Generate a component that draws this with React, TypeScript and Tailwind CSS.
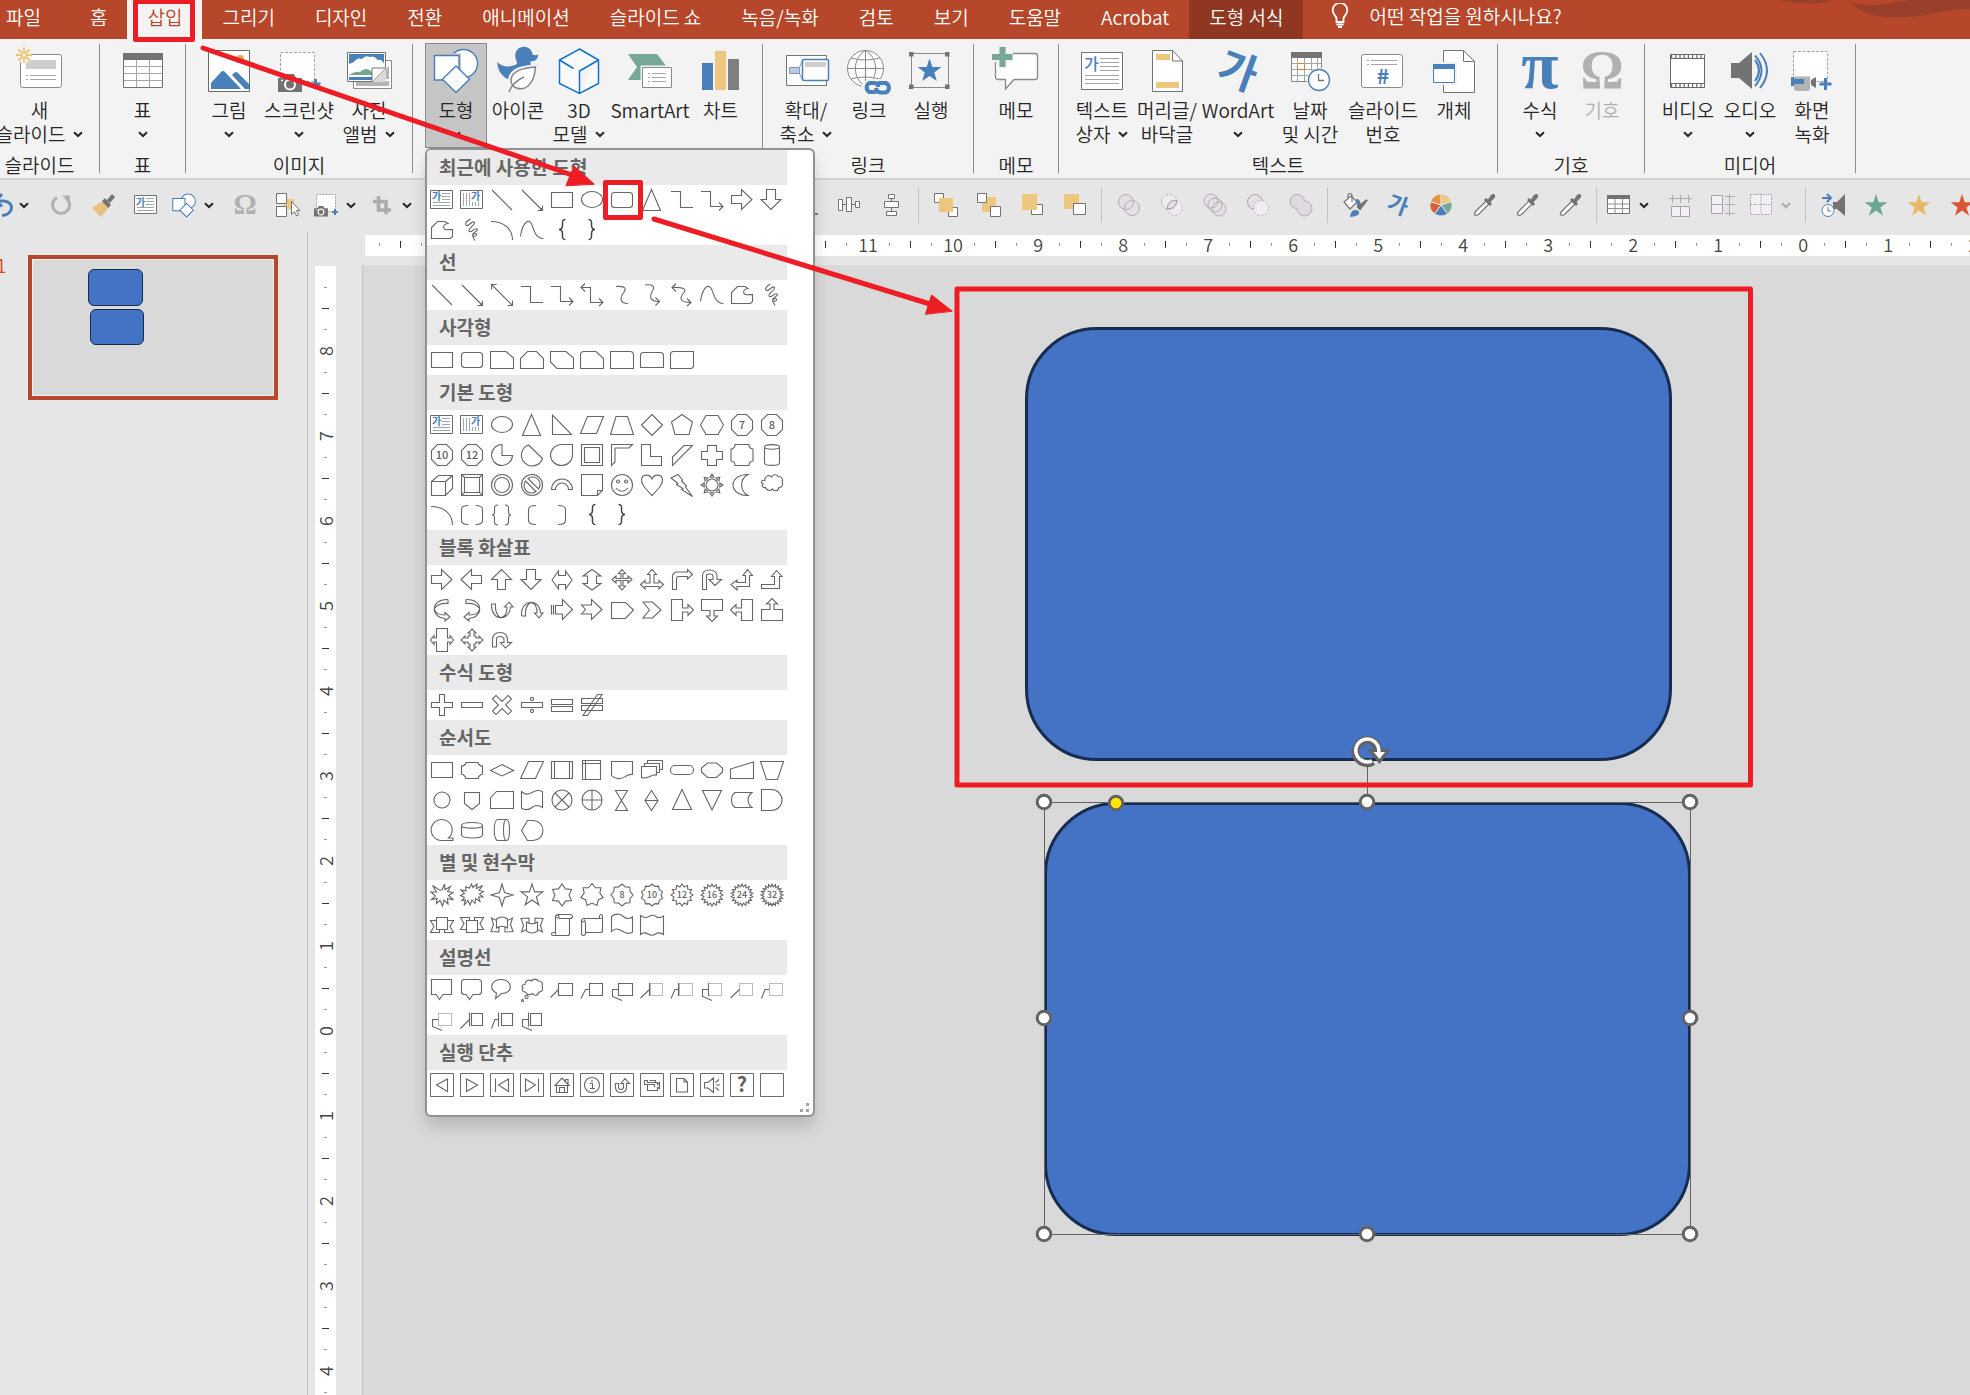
import React, { useState } from "react";

type Glyph = {
  d?: string;
  dash?: string;
  text?: string;
  textSize?: number;
  flip?: string;
  heavy?: boolean;
  box?: boolean;
  ga?: "h" | "v";
};

const circle = (cx: number, cy: number, r: number) =>
  `M${cx - r} ${cy}a${r} ${r} 0 1 0 ${2 * r} 0a${r} ${r} 0 1 0 ${-2 * r} 0z`;

const star = (n: number, outer: number, inner: number, cx = 15, cy = 15) => {
  let d = "";
  for (let i = 0; i < n * 2; i++) {
    const r = i % 2 ? inner : outer;
    const a = (Math.PI * i) / n - Math.PI / 2;
    d += `${i ? "L" : "M"}${(cx + r * Math.cos(a)).toFixed(1)} ${(cy + r * Math.sin(a)).toFixed(1)}`;
  }
  return d + "z";
};

const sunRays = () => {
  let d = circle(15, 15, 6);
  for (let i = 0; i < 8; i++) {
    const a = (Math.PI * i) / 4;
    const p = (r: number, t: number) =>
      `${(15 + r * Math.cos(a + t)).toFixed(1)} ${(15 + r * Math.sin(a + t)).toFixed(1)}`;
    d += `M${p(11, 0)}L${p(8, 0.25)}L${p(8, -0.25)}z`;
  }
  return d;
};

const MIRROR = "translate(30 0) scale(-1 1)";
const UPSIDE = "translate(0 30) scale(1 -1)";
const CW = "rotate(90 15 15)";
const CCW = "rotate(-90 15 15)";

const OCT = "M10.5 4.5H19.5L25.5 10.5V19.5L19.5 25.5H10.5L4.5 19.5V10.5z";
const CLOUD =
  "M8 10.5C7 6.5 12 4 14.5 7C16 4 20 4 21 6.5C24 6 26.5 9 25 11.5C26.5 14.5 25 18 22 17.5C21 21.5 17 21.5 15.5 19C13 21.5 9.5 20.5 8.5 17.5C5.5 18 4.5 15.5 6 14C3.5 12.5 4.5 9.5 8 10.5z";
const LBRACE =
  "M18.5 4.5C15 4.5 15.5 7 15.5 10C15.5 13 15 14.5 12 14.5C15 14.5 15.5 16 15.5 19C15.5 22 15 24.5 18.5 24.5";
const CURVED =
  "M21 4.5C12 4 7 9 7.5 14C8 18 12 20 18 20V17.5L23 22L18 26V23.5C10 23 6 17 7.8 12M21 4.5V8.5C15 8 10 10 7.8 13";
const CALLOUT_ARROW = "M4.5 4.5H15.5V13H21V9.5L26.5 15L21 20.5V17H15.5V25.5H4.5z";
const RIBBON =
  "M9.5 7.5H20.5V19.5H9.5zM9.5 10.5H3.5L7 16.5L3.5 22.5H12.5V19.5M20.5 10.5H26.5L23 16.5L26.5 22.5H17.5V19.5";
const CURVED_RIBBON =
  "M9.5 9Q15 5 20.5 9V18Q15 14.5 9.5 18zM9.5 10.5L4.5 8L6.5 14.5L4 21.5L12 22V17M20.5 10.5L25.5 8L23.5 14.5L26 21.5L18 22V17";
const SCROLL =
  "M8.5 22.5V7C8.5 4 12 4.5 12 6.5S9.5 8.5 10 7M10 4.5H23Q25.5 4.5 25.5 6.5T23 8.5H12M22.5 8.5V23.5Q22.5 25.5 20.5 25.5H6Q4.5 25.5 4.5 24T6.5 22.5H8.5V24.5";

const G: Record<string, Glyph> = {
  textbox: { ga: "h" },
  vtextbox: { ga: "v" },
  line: { d: "M5 5L25 25" },
  arrowLine: { d: "M5 5L25 25M25.5 20.5V25.5H20.5M25 23V25H23" },
  doubleLine: { d: "M4.5 4.5L25.5 25.5M25.5 20.5V25.5H20.5M4.5 9.5V4.5H9.5" },
  rect: { d: "M4.5 7.5H25.5V22.5H4.5z" },
  ellipse: { d: "M4.5 14.5A10.5 8 0 1 0 25.5 14.5A10.5 8 0 1 0 4.5 14.5z" },
  roundRect: { d: "M7.5 7.5H22.5Q25.5 7.5 25.5 10.5V19.5Q25.5 22.5 22.5 22.5H7.5Q4.5 22.5 4.5 19.5V10.5Q4.5 7.5 7.5 7.5z" },
  triangle: { d: "M14.5 4.5L23.5 25.5H5.5z" },
  elbow: { d: "M4 6.5H13.5V22.5H26" },
  elbowArrow: { d: "M4 6.5H13.5V21.5H26M22 17.5L26 21.5L22 25.5" },
  elbowDouble: { d: "M4 7.5H13.5V22.5H26M8 3.5L4 7.5L8 11.5M22 18.5L26 22.5L22 26" },
  curveLine: { d: "M9 6.5C17 6 20 8 17 12C13 17 12 23.5 21 23.5" },
  curveArrow: { d: "M8 5C15 4 18 6 16 10C13 15 11 21.5 22 21.5M18.5 17.5L22.5 21.5L18.5 25.5" },
  curveDouble: { d: "M5 7.5C16 7 20 9 17 12.5C13 17 11 22.5 24 22.5M9 3.5L5 7.5L9 11.5M20 18.5L24 22.5L20 26" },
  right: { d: "M4.5 10.5H14.5V4.5L25 14.5L14.5 24.5V18.5H4.5z" },
  left: { d: "M4.5 10.5H14.5V4.5L25 14.5L14.5 24.5V18.5H4.5z", flip: "translate(29 0) scale(-1 1)" },
  down: { d: "M9.5 4.5H18.5V14.5H24L14 24.5L4 14.5H9.5z" },
  up: { d: "M10.5 24.5H18.5V14.5H24.5L14.5 4.5L4.5 14.5H10.5z" },
  freeform: { d: "M10.5 6.5H18L21 8.5C17 9 16 11 17 13.5C18 15.5 22 14.5 25.5 14.5V21.5L23.5 23.5H4.5V12.5z" },
  scribble: { d: "M13.5 4L11 5.5C9 7 7.5 9.5 9.5 10.5C12 11.5 14.5 6 17 7C20 8.500 11 13 12 16C13.5 19 18 12 20 14C22 16 15.500 17 15.5 20C16 22.500 20.5 21 19.5 19C17.5 17.500 15 20 16 22L18 25.5" },
  arc: { d: "M4 6.5C17 6.5 25.5 14 25.5 25" },
  curve: { d: "M3.5 21.5C5 10 10 3 14 8C17 13 17 23 26.5 23.5" },
  lbrace: { d: LBRACE, heavy: true },
  rbrace: { d: LBRACE, heavy: true, flip: MIRROR },
  snip1: { d: "M3.5 6.5H19L26.5 13V23.5H3.5z" },
  snip2: { d: "M3.5 13.5L10.5 6.5H19.5L26.5 13.5V23.5H3.5z" },
  snipDiag: { d: "M3.5 6.5H19L26.5 13V23.5H10L3.5 17z" },
  snipRound: { d: "M3.5 23.5V10Q3.5 6.5 7 6.5H19L26.5 13.5V23.5z" },
  round1: { d: "M3.5 6.5H23Q26.5 6.5 26.5 10V23.5H3.5z" },
  round2: { d: "M3.5 22.5V10.5Q3.5 7.5 6.5 7.5H23.5Q26.5 7.5 26.5 10.5V22.5z" },
  roundDiag: { d: "M3.5 23.5V9.5Q3.5 6.5 6.5 6.5H26.5V20.5Q26.5 23.5 23.5 23.5z" },
  rtTriangle: { d: "M5.5 5V24.5H24.5z" },
  parallelogram: { d: "M10.5 6.5H26.5L19.5 23.5H3.5z" },
  trapezoid: { d: "M9 6.5H20.5L26.5 24.5H3.5z" },
  diamond: { d: "M15 4.5L25.5 15L15 25.5L4.5 15z" },
  pentagon: { d: "M15 4.5L25.5 12L22 24.5H8L4.5 12z" },
  hexagon: { d: "M9 5.5H21L26.5 15L21 24.5H9L3.5 15z" },
  n7: { d: OCT, text: "7" },
  n8: { d: OCT, text: "8" },
  n10: { d: OCT, text: "10" },
  n12: { d: OCT, text: "12" },
  pie: { d: "M15 15.5V4.5A10.5 10.5 0 1 0 25.5 15.5z" },
  chord: { d: "M11.5 5A10.8 10.8 0 1 0 25.5 18.5z" },
  teardrop: { d: "M15.5 4.5H25.5V15A11 10.5 0 1 1 15 4.5z" },
  frame: { d: "M4.5 4.5H25.5V25.5H4.5zM7.5 7.5H22.5V22.5H7.5z" },
  halfFrame: { d: "M4.5 4.5H25.5L22 8H8V22L4.5 25.5z" },
  corner: { d: "M4.5 4.5H13.5V16.5H24.5V25.5H4.5z" },
  stripe: { d: "M17 5.5H25.5L5.5 25.5V17z" },
  cross: { d: "M10.5 5.5H19.5V11.5H25.5V19.5H19.5V25.5H10.5V19.5H4.5V11.5H10.5z" },
  plaque: { d: "M8 4.5H22A4 4 0 0 0 26 9V21A4 4 0 0 0 22 25.5H8A4 4 0 0 0 4 21V9A4 4 0 0 0 8 4.5z" },
  can: { d: "M7.5 7C7.5 3.8 22.5 3.8 22.5 7V23C22.5 26.2 7.5 26.2 7.5 23zM7.5 7C7.5 10 22.5 10 22.5 7" },
  cube: { d: "M4.5 11.5L11.5 5.5H25.5V18.5L18.5 25.5H4.5zM4.5 11.5H18.5V25.5M18.5 11.5L25.5 5.5" },
  bevel: { d: "M4.5 4.5H25.5V25.5H4.5zM7.5 7.5H22.5V22.5H7.5zM4.5 4.5L7.5 7.5M25.5 4.5L22.5 7.5M4.5 25.5L7.5 22.5M25.5 25.5L22.5 22.5" },
  donut: { d: circle(15, 15, 10.5) + circle(15, 15, 7.5) },
  noSymbol: { d: circle(15, 15, 10.5) + "M8.5 11L19 21.5A7.5 7.5 0 0 1 8.5 11zM11 8.5L21.5 19A7.5 7.5 0 0 0 11 8.5z" },
  blockArc: { d: "M4.5 19.5A10.5 10.5 0 0 1 25.5 19.5H21.5A6.5 6.5 0 0 0 8.5 19.5z" },
  folded: { d: "M4.5 4.5H25.5V20.5L20.5 25.5H4.5zM20.5 25.5V20.5H25.5" },
  smiley: { d: circle(15, 15, 10.5) + circle(11, 11.5, 1.5) + circle(19, 11.5, 1.5) + "M9 18Q15 24.5 21 18" },
  heart: { d: "M15 25.5C8 18 4 14 4.5 9.5C5 4 13 3.5 15 9C17 3.5 25 4 25.5 9.5C26 14 22 18 15 25.5z" },
  bolt: { d: "M4 8L11 4.5L15.5 10L14.5 11L19.5 16L18.5 17L25.5 26.5L14.5 19.5L16 18.5L9.5 14.5L11 13.5z" },
  sun: { d: sunRays() },
  moon: { d: "M21 4.5C14 4 6 8 6 15S14 26 21 25.5C12.5 21 12.5 9 21 4.5z" },
  cloud: { d: CLOUD },
  bracketPair: { d: "M11.5 5.5Q4.5 5.5 4.5 9.5V20.5Q4.5 24.5 11.5 24.5M18.5 5.5Q25.5 5.5 25.5 9.5V20.5Q25.5 24.5 18.5 24.5" },
  bracePair: { d: "M11 5Q7.5 5 7.5 8V12Q7.5 15 5 15Q7.5 15 7.5 18V22Q7.5 25 11 25M18 5Q21.5 5 21.5 8V12Q21.5 15 24 15Q21.5 15 21.5 18V22Q21.5 25 18 25" },
  lbracket: { d: "M19 5.5Q11.5 5.5 11.5 9.5V20.5Q11.5 24.5 19 24.5" },
  rbracket: { d: "M11 5.5Q18.5 5.5 18.5 9.5V20.5Q18.5 24.5 11 24.5" },
  leftRight: { d: "M5 15L11.5 6V10.5H18.5V6L25 15L18.5 24V19.5H11.5V24z" },
  upDown: { d: "M15 4.5L24 11H19.5V18.5H24L15 25L6 18.5H10.5V11H6z" },
  quad: { d: "M15 4.5L18.5 8.5H16V13.5H21V11L25 14.5L21 18V15.5H16V21H18.5L15 25L11.5 21H14V15.5H9V18L5 14.5L9 11V13.5H14V8.5H11.5z" },
  threeWay: { d: "M15 4.5L19.5 9.5H17V18H22V15.5L26.5 19.5L22 24V21.5H8V24L3.5 19.5L8 15.5V18H13V9.5H10.5z" },
  bent: { d: "M5.5 24.5V12Q5.5 7 10.5 7H20.5V4.5L25.5 9.5L20.5 14V11.5H11.5Q9.5 11.5 9.5 14V24.5z" },
  uturn: { d: "M5.5 24.5V11Q5.5 5 12.5 5T20 11V14.5H24.5L18 20.5L12 14.5H16V11Q16 9 12.5 9T9.5 11V24.5z" },
  leftUp: { d: "M20.5 4.5L25.5 10.5H22.5V21.5H10V25L4 19.5L10 15V17.5H18.5V10.5H16z" },
  bentUp: { d: "M19.5 5.5L25 11.5H22.5V23.5H4.5V19.5H17.5V11.5H14.5z" },
  curvedRight: { d: CURVED },
  curvedLeft: { d: CURVED, flip: MIRROR },
  curvedUp: { d: CURVED, flip: CCW },
  curvedDown: { d: CURVED, flip: `${MIRROR} ${CW}` },
  striped: { d: "M4.5 10V19.5M6.5 10V19.5M8.5 10.5H15.5V4.5L25.5 14.5L15.5 24.5V19H8.5z" },
  notched: { d: "M4.5 10H14.5V4.5L25 14.5L14.5 24.5V19H4.5L8.5 14.5z" },
  homePlate: { d: "M4.5 7.5H18.5L26.5 15L18.5 23.5H4.5z" },
  chevron: { d: "M6 7H15.5L24 15L15.5 23H6L12.5 15z" },
  calloutR: { d: CALLOUT_ARROW },
  calloutD: { d: CALLOUT_ARROW, flip: CW },
  calloutL: { d: CALLOUT_ARROW, flip: MIRROR },
  calloutU: { d: CALLOUT_ARROW, flip: CCW },
  calloutLR: { d: "M9.5 3.5H20.5V13H23V10.5L26.5 15L23 19.5V17H20.5V26.5H9.5V17H7V19.5L3.5 15L7 10.5V13H9.5z" },
  calloutQuad: { d: "M15 4L19 8H17V11H19V13H22V11L26 15L22 19V17H19V19H17V22H19L15 26L11 22H13V19H11V17H8V19L4 15L8 11V13H11V11H13V8H11z" },
  circular: { d: "M5.5 22V15Q5.5 7.5 13 7.5T20.5 15V17.5H24.5L18.5 23L13.5 17.5H17V15Q17 11.5 13 11.5T9.5 15V22z" },
  plus: { d: "M12.5 4.5H17.5V12.5H25.5V17.5H17.5V25.5H12.5V17.5H4.5V12.5H12.5z" },
  minus: { d: "M4.5 12.5H25.5V17.5H4.5z" },
  times: { d: "M12.5 4H17.5V12.5H26V17.5H17.5V26H12.5V17.5H4V12.5H12.5z", flip: "rotate(45 15 15)" },
  divide: { d: "M4.5 12.5H25.5V17.5H4.5z" + circle(15, 9, 1.6) + circle(15, 21, 1.6) },
  equal: { d: "M4.5 9.5H25.5V14.5H4.5zM4.5 16.5H25.5V21.5H4.5z" },
  notEqual: { d: "M4.5 8.5H25.5V13.5H4.5zM4.5 15.5H25.5V20.5H4.5zM20.5 4.5H25L10.5 25.5H6z" },
  altProcess: { d: "M9 7.5H21Q22 11 25.5 11V19Q22 20 21 23.5H9Q8 20 4.5 19V11Q8 11 9 7.5z" },
  decision: { d: "M15 9.5L26.5 15.5L15 21L3.5 15.5z" },
  data: { d: "M11.5 6.5H26.5L18.5 23.5H3.5z" },
  predefined: { d: "M4.5 6.5H25.5V23.5H4.5zM7.5 6.5V23.5M22.5 6.5V23.5" },
  storage: { d: "M5.5 5.5H23.5V24.5H5.5zM8.5 5.5V24.5M5.5 8.5H23.5" },
  document: { d: "M4.5 6.5H25.5V19.5C19 18.5 17 25 10.5 23.5Q7 23.5 4.5 20.5z" },
  multidoc: { d: "M4.5 11.5H19.5V20C14 18.5 12 25 4.5 22.5zM7.5 11.5V8.5H22.5V17.5H19.5M10.5 8.5V5.5H25.5V14.5H22.5" },
  terminator: { d: "M8 10.5H22A4.5 4.5 0 0 1 22 19.5H8A4.5 4.5 0 0 1 8 10.5z" },
  preparation: { d: "M10.5 8H19.5L25.5 13V17L19.5 22.5H10.5L4.5 17V13z" },
  manualInput: { d: "M3.5 14L26.5 7V23.5H3.5z" },
  manualOp: { d: "M3.5 6.5H26.5L20.5 24.5H9.5z" },
  connector: { d: circle(15, 15, 8) },
  offpage: { d: "M7.5 7.5H22.5V18.5L15 24.5L7.5 18.5z" },
  card: { d: "M9.5 6.5H26.5V23.5H3.5V13z" },
  tape: { d: "M4.5 6.5C8 10 12 9.5 15 7.5S22 5 25.5 6.5V22.5C22 20 18 20 15 22.5S8 25 4.5 23.5z" },
  summing: { d: circle(15, 15, 10) + "M8 8L22 22M22 8L8 22" },
  or: { d: circle(15, 15, 10) + "M15 5V25M5 15H25" },
  collate: { d: "M8.5 5.5H20.5L8.5 25.5H20.5z" },
  sort: { d: "M14.5 5.5L21 15.5L14.5 25.5L8 15.5zM8 15.5H21" },
  extract: { d: "M15 4.5L24.5 24.5H5.5z" },
  merge: { d: "M5.5 5.5H24.5L15 25z" },
  stored: { d: "M8 7.5H25Q21 11 21 15T25 22.5H8Q4.5 20 4.5 15T8 7.5z" },
  delay: { d: "M4.5 4.5H14.5A10.5 10.5 0 0 1 14.5 25.5H4.5z" },
  sequential: { d: "M26 25.5H15A10.5 10.5 0 1 1 21.5 23H26z" },
  disk: { d: "M4.5 10.5C4.5 6.5 25.5 6.5 25.5 10.5V20C25.5 24 4.5 24 4.5 20zM4.5 10.5C4.5 14 25.5 14 25.5 10.5" },
  direct: { d: "M11 4.5H19.5C23.5 4.5 23.5 25.5 19.5 25.5H11C6 25.5 6 4.5 11 4.5zM19.5 4.5C15.5 4.5 15.5 25.5 19.5 25.5" },
  display: { d: "M10.5 5.5H16A10 10 0 0 1 16 25.5H10.5L4.5 15.5z" },
  burst1: { d: "M15 10L17.5 4L18 9.5L23.5 6.5L20.5 11.5L26 12.5L21.5 15.5L26.5 20L20.5 18.5L21 24L17 20L15.5 26L13 20.5L9.5 23.5L10 18.5L4.5 19.5L8.5 16L4 12L9.5 12L5.5 5.5L12.5 10z" },
  burst2: { d: "M12.5 8L14.5 4L16 7.5L20 4L19.5 8.5L25.5 5.5L22 10.5L26.5 11.5L22.5 14L26 17L21.5 17L23 21.5L18.5 18.5L18 23.5L15 20L13 25L11 20.5L7 25.5L8.5 20L5 20.5L7.5 17.5L3.5 15.5L7.5 13.5L4 10L9 11L8.5 7z" },
  star4: { d: star(4, 11, 3.5) },
  star5: { d: star(5, 11.5, 4.5, 15, 15.5) },
  star6: { d: star(6, 11, 7) },
  star7: { d: star(7, 11.5, 8) },
  star8: { d: star(8, 11, 8.8), text: "8", textSize: 9 },
  star10: { d: star(10, 11, 9), text: "10", textSize: 9 },
  star12: { d: star(12, 11, 8.2), text: "12", textSize: 9 },
  star16: { d: star(16, 11, 8.2), text: "16", textSize: 9 },
  star24: { d: star(18, 11, 8.2), text: "24", textSize: 9 },
  star32: { d: star(20, 11, 8.2), text: "32", textSize: 9 },
  ribbonUp: { d: RIBBON },
  ribbonDown: { d: RIBBON, flip: UPSIDE },
  curvedRibbonUp: { d: CURVED_RIBBON },
  curvedRibbonDown: { d: CURVED_RIBBON, flip: UPSIDE },
  vscroll: { d: SCROLL },
  hscroll: { d: SCROLL, flip: `${MIRROR} ${CW}` },
  wave: { d: "M4.5 6.5C10 2 15 5 17 7S23 9 25.5 7V22C22 24.5 18 23 15 21S8 17.5 4.5 21.5z" },
  doubleWave: { d: "M3.5 5.5Q8 9 12 6.5T19 6.5T26.5 6V24.5Q22 21.5 18.5 24T11 24T3.5 24.5z" },
  wedgeRect: { d: "M4.5 4.5H24.5V19.5H16L12.5 24.5L9 19.5H4.5z" },
  wedgeRound: { d: "M7.5 4.5H21.5Q24.5 4.5 24.5 7.5V16.5Q24.5 19.5 21.5 19.5H16L12.5 24.5L9 19.5H7.5Q4.5 19.5 4.5 16.5V7.5Q4.5 4.5 7.5 4.5z" },
  wedgeEllipse: { d: "M8.5 23.5L9.5 18C1.5 14 4 4.5 14.5 4.5S27.5 18.5 14.5 18.5Z" },
  cloudCallout: { d: "M8 9.5C8 5.5 12 4 14.5 6C16 3.5 20 3.5 21 6C24.5 5.5 26.5 8.5 25 11C26.5 14 25 17.5 22 17C21 21 17 21 15.5 18.5C13 20.5 9.5 20 8.5 17C5.5 17 4.5 15 6 13C4 11.5 5 9.5 8 9.5z" + circle(9.5, 22, 1.6) + circle(5.5, 25.5, 1) },
  line1: { d: "M11.5 8.5H25.5V20.5H11.5zM3.5 22.5L11.5 14.5" },
  line2: { d: "M12.5 8.5H25.5V20.5H12.5zM12.5 14.5H8.5L4 23.5" },
  line3: { d: "M11.5 8.5H25.5V20.5H11.5zM11.5 14.5H5.5V21.5L15 25.5" },
  accent1: { d: "M12.5 8V21M3.5 23L12.5 14.5", dash: "M13.5 8.5H25.5V20.5H13.5z" },
  accent2: { d: "M11.5 8V21M11.5 14.5H8L4 23.5", dash: "M12.5 8.5H25.5V20.5H12.5z" },
  accent3: { d: "M11.5 8V21M11.5 14.5H5.5V21.5L15 25.5", dash: "M11.5 8.5H24.5V20.5H11.5z" },
  plain1: { d: "M3.5 23L12.5 14.5", dash: "M12.5 8.5H25.5V20.5H12.5z" },
  plain2: { d: "M12 14.5H8L4.5 23.5", dash: "M12.5 8.5H25.5V20.5H12.5z" },
  plain3: { d: "M11.5 14.5H5.5V21.5L15 25.5", dash: "M11.5 8.5H24.5V20.5H11.5z" },
  bar1: { d: "M14.5 8.5H25.5V20.5H14.5zM12.5 7.5V21.5M3.5 23.5L12.5 14.5" },
  bar2: { d: "M14.5 8.5H25.5V20.5H14.5zM11.5 7.5V21.5M11.5 14.5H8L4.5 23.5" },
  bar3: { d: "M13.5 8.5H24.5V20.5H13.5zM11.5 7.5V21.5M11.5 14.5H5.5V21.5L15 25.5" },
  abBack: { box: true, d: "M20.5 9V21.5L9.5 15z" },
  abNext: { box: true, d: "M9.5 9V21.5L20.5 15z" },
  abBegin: { box: true, d: "M21.5 9V21.5L11.5 15zM8.5 8.5V22" },
  abEnd: { box: true, d: "M8.5 9V21.5L18.5 15zM21.5 8.5V22" },
  abHome: { box: true, d: "M8 15.5L15 8L22 15.5zM9.5 15.5V22.5H20.5V15.5M12.5 22.5V17.5H17.5V22.5M18.5 11.5V9.5H21V14" },
  abInfo: { box: true, d: circle(15, 15, 7.5) + "M13 13.5H15.5V18.5M13 18.5H18M15 10V12" },
  abReturn: { box: true, d: "M8.5 13.5V17Q8.5 22.5 14 22.5T19.5 17V13.5H22.5L18 8.5L14 13.5H16.5V17Q16.5 19.500 14 19.5T11.5 17V13.5z" },
  abMovie: { box: true, d: "M7.5 10.5H10.5V12.5H20.5V14.5L22.5 12.5V18.5L20.5 17.5V20.5H10.5V14.5H7.5zM12.5 10.5H18.5V12.5M10.5 14.5H17.5V17" },
  abDoc: { box: true, d: "M9.5 8.5H17L20.5 12V22H9.5zM17 8.5V12H20.5" },
  abSound: { box: true, d: "M7.5 12.5H11L16.5 8V22.5L11 18H7.5zM18.5 12.5L22 9.5M19 15H23M18.5 17.5L22 20.5" },
  abHelp: { box: true, text: "?", textSize: 20 },
  abBlank: { box: true },
};

const SECTIONS: { title: string; shapes: string }[] = [
  {
    title: "최근에 사용한 도형",
    shapes:
      "textbox vtextbox line arrowLine rect ellipse roundRect triangle elbow elbowArrow right down freeform scribble arc curve lbrace rbrace",
  },
  {
    title: "선",
    shapes:
      "line arrowLine doubleLine elbow elbowArrow elbowDouble curveLine curveArrow curveDouble curve freeform scribble",
  },
  {
    title: "사각형",
    shapes: "rect roundRect snip1 snip2 snipDiag snipRound round1 round2 roundDiag",
  },
  {
    title: "기본 도형",
    shapes:
      "textbox vtextbox ellipse triangle rtTriangle parallelogram trapezoid diamond pentagon hexagon n7 n8 n10 n12 pie chord teardrop frame halfFrame corner stripe cross plaque can cube bevel donut noSymbol blockArc folded smiley heart bolt sun moon cloud arc bracketPair bracePair lbracket rbracket lbrace rbrace",
  },
  {
    title: "블록 화살표",
    shapes:
      "right left up down leftRight upDown quad threeWay bent uturn leftUp bentUp curvedRight curvedLeft curvedUp curvedDown striped notched homePlate chevron calloutR calloutD calloutL calloutU calloutLR calloutQuad circular",
  },
  { title: "수식 도형", shapes: "plus minus times divide equal notEqual" },
  {
    title: "순서도",
    shapes:
      "rect altProcess decision data predefined storage document multidoc terminator preparation manualInput manualOp connector offpage card tape summing or collate sort extract merge stored delay sequential disk direct display",
  },
  {
    title: "별 및 현수막",
    shapes:
      "burst1 burst2 star4 star5 star6 star7 star8 star10 star12 star16 star24 star32 ribbonUp ribbonDown curvedRibbonUp curvedRibbonDown vscroll hscroll wave doubleWave",
  },
  {
    title: "설명선",
    shapes:
      "wedgeRect wedgeRound wedgeEllipse cloudCallout line1 line2 line3 accent1 accent2 accent3 plain1 plain2 plain3 bar1 bar2 bar3",
  },
  {
    title: "실행 단추",
    shapes:
      "abBack abNext abBegin abEnd abHome abInfo abReturn abMovie abDoc abSound abHelp abBlank",
  },
];

const ShapeGlyph = ({ name }: { name: string }) => {
  const g = G[name];
  if (g.ga) {
    return (
      <svg viewBox="0 0 30 30" className="size-[30px]" fill="none" aria-hidden="true">
        <path d="M3.5 5.5H25.5V23.5H3.5z" stroke="#6b6b6b" fill="#fff" />
        {g.ga === "h" ? (
          <path d="M15 8.5H23M15 11.5H23M15 14.5H23M6 17.5H23M6 20.5H23" stroke="#a6a6a6" />
        ) : (
          <path d="M6.5 8V21M9.5 8V21M12.5 8V21M15.5 17V21M18.5 17V21M21.5 17V21" stroke="#a6a6a6" />
        )}
        <text x={g.ga === "h" ? 5 : 14} y="15" fontSize="10" fontWeight="700" fill="#3f7dbd">
          가
        </text>
      </svg>
    );
  }
  return (
    <svg viewBox="0 0 30 30" className="size-[30px]" fill="none" aria-hidden="true">
      {g.box && <path d="M3.5 3.5H26.5V26.5H3.5z" stroke="#6b6b6b" />}
      {g.d && (
        <path
          d={g.d}
          transform={g.flip}
          stroke={g.heavy ? "#444" : "#666"}
          strokeWidth={g.heavy ? 1.5 : 1.1}
        />
      )}
      {g.dash && <path d={g.dash} stroke="#777" strokeDasharray="1 1" />}
      {g.text && (
        <text
          x="15"
          y={g.text === "?" ? 22 : g.textSize ? 18 : 19}
          fontSize={g.textSize ?? 11}
          fontWeight={g.text === "?" ? 700 : 500}
          textAnchor="middle"
          fill="#5f5f5f"
        >
          {g.text}
        </text>
      )}
    </svg>
  );
};

const Chevron = ({ muted = false }: { muted?: boolean }) => (
  <svg viewBox="0 0 10 7" className="h-[7px] w-[10px]" fill="none" aria-hidden="true">
    <path d="M1 1.2L5 5L9 1.2" stroke={muted ? "#a8a8a8" : "#262626"} strokeWidth="2" />
  </svg>
);

const ShapeGallery = () => (
  <div
    role="menu"
    aria-label="도형"
    className="absolute left-0 top-full z-20 w-[390px] overflow-hidden rounded-md border-2 border-[#929292] bg-white text-left shadow-[0_10px_16px_rgba(0,0,0,0.15)]"
  >
    {SECTIONS.map((section) => (
      <section key={section.title} className="w-[360px]">
        <h3 className="h-[35px] bg-[#eaeaea] pl-3 text-[19px] font-bold leading-[33px] text-[#666]">
          {section.title}
        </h3>
        <div className="grid grid-cols-12">
          {section.shapes.split(" ").map((name) => (
            <button key={name} type="button" aria-label={name} className="size-[30px] hover:bg-[#fde7df]">
              <ShapeGlyph name={name} />
            </button>
          ))}
        </div>
      </section>
    ))}
    <div className="flex h-[15px] justify-end pr-1 pt-[3px]">
      <svg viewBox="0 0 9 9" className="size-[9px]" fill="#a3a3a3" aria-hidden="true">
        <path d="M6 0h3v3h-3zM0 6h3v3h-3zM6 6h3v3h-3z" />
      </svg>
    </div>
  </div>
);

const BLUE = "#4a80b9";
const GRAY = "#737373";
const GOLD = "#edc77e";

const CameraMark = ({ x, y, s = 1 }: { x: number; y: number; s?: number }) => (
  <g transform={`translate(${x} ${y}) scale(${s})`}>
    <path d="M0 4H6L8 0H16L18 4H24V18H0z" fill={GRAY} />
    <circle cx="12" cy="10.5" r="5" fill="none" stroke="#fff" strokeWidth="2" />
    <path d="M3 6.5H5" stroke="#fff" strokeWidth="1.5" />
  </g>
);

const ShapesMark = () => (
  <>
    <circle cx="30.5" cy="17.5" r="14" fill="#fff" stroke={BLUE} strokeWidth="1.4" />
    <path d="M1.5 9.5H26V34H1.5z" fill="#fff" stroke="#c5c5c5" strokeWidth="4" />
    <path d="M1.5 9.5H26V34H1.5z" fill="#fff" stroke={BLUE} strokeWidth="1.4" />
    <path d="M23 20L36.5 33.3L23 46.5L9.5 33.3z" fill="#fff" stroke={BLUE} strokeWidth="1.4" />
  </>
);

const RIBBON_ICONS: Record<string, React.ReactNode> = {
  newSlide: (
    <>
      <rect x="3.5" y="8.5" width="41" height="33" rx="2" fill="#fff" stroke="#8a8a8a" />
      <path d="M9 14H39V23H9z" fill="#cdcdcd" />
      <path d="M9 29.5H11M13 29.5H39M9 33.5H11M13 33.5H39" stroke="#a6a6a6" />
      <circle cx="7" cy="9" r="8" fill="#f3f3f3" />
      <path d="M7 1V6M7 12V17M-1 9H4M10 9H15M1.3 3.3L5 7M9 11L12.7 14.7M12.7 3.3L9 7M5 11L1.3 14.7" stroke={GOLD} strokeWidth="2" />
      <circle cx="7" cy="9" r="2.6" fill="none" stroke={GOLD} strokeWidth="1.6" />
    </>
  ),
  table: (
    <>
      <path d="M3.5 7.5H42.5V41.5H3.5z" fill="#fff" stroke={GRAY} />
      <path d="M3 7H43V14H3z" fill={GRAY} />
      <path d="M16.5 14V41M29.5 14V41M4 20.5H42M4 27.5H42M4 34.5H42" stroke="#a6a6a6" />
    </>
  ),
  picture: (
    <>
      <path d="M2.5 4.5H43.5V45.5H2.5z" fill="#fff" stroke="#6a6a6a" />
      <circle cx="34" cy="13" r="4" fill="#e8a94f" />
      <path d="M5 43V37L15 26Q17 24 19 26L35 43zM26 29L28 27Q30 25 32 27L43 38V43H39z" fill={BLUE} />
    </>
  ),
  screenshot: (
    <>
      <path d="M4.5 6.5H38.5V35.5H4.5z" fill="#fff" stroke="#a6a6a6" strokeDasharray="3 1.5" />
      <CameraMark x={2} y={28} />
      <path d="M39.5 33V43M34.5 38H44.5" stroke={BLUE} strokeWidth="3" />
    </>
  ),
  album: (
    <>
      <path d="M7.5 14.5H45.5V42.5H7.5z" fill="#fff" stroke="#8a8a8a" />
      <path d="M10 35H43V40H10zM30 32L43 20V33H30z" fill="#b5b5b5" />
      <path d="M1.5 6.5H39.5V35.5H1.5z" fill="#fff" stroke={GRAY} />
      <path d="M3 8H38V18Q36 13 32 14Q28 9 24 11Q19 9 16 13Q11 11 8 16L3 18z" fill={BLUE} />
      <path d="M3 29Q10 25 14 26Q20 20 26 26V29z" fill="#73a590" />
      <path d="M3 31H26V34H3z" fill={BLUE} />
      <path d="M26 36V22H40z" fill="#fff" stroke={GRAY} />
      <path d="M26 36L40 22V36z" fill="#d9d9d9" />
    </>
  ),
  shapes: <ShapesMark />,
  icons: (
    <>
      <path
        d="M29 0.8C34 0.8 37 4.5 37.6 8.6Q40 10 43.3 8.6Q42.5 16 35 15.5C38 22 35 30 27 33C18 37 3 33 2.3 16Q9 23 20 19Q23 18 21.5 15C18 8 22 0.8 29 0.8z"
        fill={BLUE}
      />
      <path d="M40 20C28 22 16 23 15 34C14.5 43 27 46 33 40C39 35 39.5 27 40 20z" fill="#fff" stroke="#f3f3f3" strokeWidth="4" />
      <path d="M40.5 21C29 22 17 24 16 34C16 43 27 45 33 40C39 35 40 28 40.5 21zM14 46C17 38 22 34 29 31" fill="#fff" stroke="#868686" strokeWidth="1.5" />
    </>
  ),
  cube: (
    <path
      d="M23.5 3L42.5 14V37.5L23.5 47.5L3.5 37.5V14zM42.5 14L23.5 25V47.5M3.5 14L17.5 22.5"
      fill="#fafafa"
      stroke="#1173c5"
      strokeWidth="1.5"
    />
  ),
  smartArt: (
    <>
      <path d="M1 8H30L40 21L30 34H1L10 21z" fill="#77a896" />
      <path d="M15.5 21.5H44.5V41.5H15.5z" fill="#fff" stroke="#f3f3f3" strokeWidth="4" />
      <path d="M15.5 21.5H44.5V41.5H15.5z" fill="#fff" stroke="#8a8a8a" />
      <path d="M21 27.5H23M25 27.5H39M21 31.5H23M25 31.5H39M21 35.5H23M25 35.5H39" stroke="#a6a6a6" />
    </>
  ),
  chart: (
    <>
      <path d="M4 17H15V44H4z" fill={BLUE} />
      <path d="M17 5H28V44H17z" fill={GOLD} />
      <path d="M30 13H41V44H30z" fill="#808080" />
    </>
  ),
  zoom: (
    <>
      <path d="M3.5 9.5H43.5V39.5H3.5z" fill="#fff" stroke={GRAY} />
      <path d="M6.5 21.5H16.5V27.5H6.5zM16.5 21.5L19.5 14M16.5 27.5L19.5 34" fill="#b7cbe6" stroke="#8398b5" />
      <rect x="19.5" y="13.5" width="26" height="21" rx="1.5" fill="#fff" stroke={BLUE} strokeWidth="1.5" />
      <path d="M22 16H43V21H22z" fill="#cdcdcd" />
    </>
  ),
  link: (
    <>
      <circle cx="19.5" cy="22.5" r="18" fill="#fff" stroke="#8a8a8a" />
      <path d="M19.5 4.5V40.5M1.5 22.5H37.5M5 12Q19 16 34 12M5 33Q19 29 34 33M19.5 4.5C6 12 6 33 19.5 40.5M19.5 4.5C33 12 33 33 19.5 40.5" fill="none" stroke="#8a8a8a" />
      <path d="M24 33H39Q49 36 45 46L40 50H20Q12 45 17 36z" fill="#f3f3f3" />
      <path d="M30 46H23.5A5 5 0 0 1 23.5 37H28Q32 37 32.5 41M32 37H39.5A5 5 0 0 1 39.5 46.5H35Q30.5 46.5 30 42" fill="none" stroke={BLUE} strokeWidth="4" />
    </>
  ),
  action: (
    <>
      <path d="M3.5 7.5H40.5V41.5H3.5z" fill="none" stroke="#8a8a8a" />
      <path d="M1 6H5.5V10.5H1zM37 6H41.5V10.5H37zM1 38.5H5.5V43H1zM37 38.5H41.5V43H37z" fill={GRAY} />
      <path d={star(5, 12.5, 5, 21.5, 25)} fill={BLUE} />
    </>
  ),
  memo: (
    <>
      <path d="M5 7.5H42Q44.5 7.5 44.5 10V31Q44.5 33.5 42 33.5H21L12.5 43V33.5H5Q2.5 33.5 2.5 31V10Q2.5 7.5 5 7.5z" fill="#fff" stroke="#8a8a8a" strokeWidth="1.3" />
      <path d="M9.5 0V22M-1 11H20" stroke="#f3f3f3" strokeWidth="10" />
      <path d="M9.5 1V21M-1 11H19.5" stroke="#77a896" strokeWidth="6" />
    </>
  ),
  textBox: (
    <>
      <path d="M2.5 6.5H43.5V43.5H2.5z" fill="#fff" stroke={GRAY} />
      <path d="M21 12.5H40M21 16.5H40M21 20.5H40M21 24.5H40M6 29.5H40M6 33.5H40M6 37.5H40" stroke="#a6a6a6" />
      <text x="5" y="24" fontSize="16" fontWeight="500" fill={BLUE}>
        가
      </text>
    </>
  ),
  header: (
    <>
      <path d="M8.5 4.5H28.5L38.5 15V45.5H8.5z" fill="#fff" stroke={GRAY} />
      <path d="M28.5 4.5V15H38.5" fill="none" stroke={GRAY} />
      <path d="M12 8H26V14H12zM12 36H35V42H12z" fill={GOLD} />
    </>
  ),
  wordArt: (
    <text x="23" y="40" fontSize="42" fontWeight="700" textAnchor="middle" fill={BLUE} transform="rotate(20 23 25)">
      가
    </text>
  ),
  date: (
    <>
      <path d="M4.5 6.5H34.5V35.5H4.5z" fill="#fff" stroke="#8a8a8a" />
      <path d="M4 6H35V12H4z" fill={GRAY} />
      <path d="M10.5 12V35M17.5 12V35M24.5 12V35M30.5 12V35M5 17.5H34M5 23.5H34M5 29.5H34" stroke="#a6a6a6" />
      <path d="M10.5 17.5H17.5V23.5H10.5z" fill="#fff" stroke="#dd8237" />
      <circle cx="32" cy="34" r="12" fill="#f3f3f3" />
      <circle cx="32" cy="34" r="10.5" fill="#fff" stroke={BLUE} strokeWidth="1.3" />
      <path d="M31.5 28V34.5H37" fill="none" stroke={GRAY} strokeWidth="1.3" />
    </>
  ),
  slideNumber: (
    <>
      <rect x="1.5" y="8.5" width="41" height="33" rx="2" fill="#fff" stroke="#8a8a8a" />
      <path d="M7 14.5H9M11 14.5H37M7 18.5H9M11 18.5H37" stroke="#a6a6a6" />
      <text x="23" y="38" fontSize="21" fontWeight="700" textAnchor="middle" fill={BLUE}>
        #
      </text>
    </>
  ),
  object: (
    <>
      <path d="M12.5 4.5H32.5L43.5 15.5V46.5H12.5z" fill="#fff" stroke={GRAY} />
      <path d="M32.5 4.5V15.5H43.5" fill="none" stroke={GRAY} />
      <path d="M2 18H24V37H2z" fill="#fff" stroke="#f3f3f3" strokeWidth="4" />
      <path d="M2.5 18.5H23.5V36.5H2.5z" fill="#fff" stroke={BLUE} />
      <path d="M2 18H24V23H2z" fill={BLUE} />
    </>
  ),
  equation: (
    <text x="23" y="42" fontSize="68" fontWeight="700" textAnchor="middle" fill={BLUE} className="font-['Liberation_Serif',serif]">
      π
    </text>
  ),
  symbol: (
    <text x="23" y="42" fontSize="54" fontWeight="700" textAnchor="middle" fill="#b1afb1" className="font-['Liberation_Serif',serif]">
      Ω
    </text>
  ),
  video: (
    <>
      <path d="M5.5 8.5H39.5V41.5H5.5z" fill="#fff" stroke="#6a6a6a" />
      <path d="M5 12.5H40M5 37.5H40" stroke="#6a6a6a" />
      <path d="M6 10.5H40M6 39.5H40" stroke="#6a6a6a" strokeWidth="3.5" strokeDasharray="1.2 3" />
    </>
  ),
  audio: (
    <>
      <path d="M4 17H12L25 6V43L12 32H4z" fill={GRAY} />
      <path d="M28 14Q36 24.5 28 35M28 9.5Q41 24.5 28 40M33 7Q47 24.5 33 42" fill="none" stroke={BLUE} strokeWidth="2" />
    </>
  ),
  record: (
    <>
      <path d="M4.5 5.5H38.5V35.5H4.5z" fill="#fff" stroke="#a6a6a6" strokeDasharray="3 1.5" />
      <path d="M5 30.5H21V42Q21 45 18 45H8Q5 45 5 42z" fill="#b3b3b3" />
      <path d="M22 34L27 31V42L22 39z" fill={GRAY} />
      <path d="M2 31H5V33H15V38H5V40H2z" fill={BLUE} />
      <path d="M36.5 32V44M30.5 38H42.5" stroke={BLUE} strokeWidth="3" />
    </>
  ),
};

type Command = {
  icon: string;
  lines: string[];
  width: string;
  arrow?: boolean;
  disabled?: boolean;
};

const GROUPS: { label: string; className: string; items: Command[] }[] = [
  {
    label: "슬라이드",
    className: "-ml-5 w-[119px]",
    items: [{ icon: "newSlide", lines: ["새", "슬라이드"], width: "w-[96px]", arrow: true }],
  },
  {
    label: "표",
    className: "px-3",
    items: [{ icon: "table", lines: ["표", ""], width: "w-[61px]", arrow: true }],
  },
  {
    label: "이미지",
    className: "px-[13px]",
    items: [
      { icon: "picture", lines: ["그림", ""], width: "w-[60px]", arrow: true },
      { icon: "screenshot", lines: ["스크린샷", ""], width: "w-[80px]", arrow: true },
      { icon: "album", lines: ["사진", "앨범"], width: "w-[60px]", arrow: true },
    ],
  },
  {
    label: "일러스트레이션",
    className: "px-3",
    items: [
      { icon: "shapes", lines: ["도형", ""], width: "w-[62px]", arrow: true },
      { icon: "icons", lines: ["아이콘"], width: "w-[62px]" },
      { icon: "cube", lines: ["3D", "모델"], width: "w-[60px]", arrow: true },
      { icon: "smartArt", lines: ["SmartArt"], width: "w-[82px]" },
      { icon: "chart", lines: ["차트"], width: "w-[59px]" },
    ],
  },
  {
    label: "링크",
    className: "px-3",
    items: [
      { icon: "zoom", lines: ["확대/", "축소"], width: "w-[62px]", arrow: true },
      { icon: "link", lines: ["링크"], width: "w-[64px]" },
      { icon: "action", lines: ["실행"], width: "w-[60px]" },
    ],
  },
  {
    label: "메모",
    className: "px-3",
    items: [{ icon: "memo", lines: ["메모"], width: "w-[60px]" }],
  },
  {
    label: "텍스트",
    className: "px-[11px]",
    items: [
      { icon: "textBox", lines: ["텍스트", "상자"], width: "w-[64px]", arrow: true },
      { icon: "header", lines: ["머리글/", "바닥글"], width: "w-[66px]" },
      { icon: "wordArt", lines: ["WordArt", ""], width: "w-[76px]", arrow: true },
      { icon: "date", lines: ["날짜", "및 시간"], width: "w-[68px]" },
      { icon: "slideNumber", lines: ["슬라이드", "번호"], width: "w-[78px]" },
      { icon: "object", lines: ["개체"], width: "w-[64px]" },
    ],
  },
  {
    label: "기호",
    className: "px-[11px]",
    items: [
      { icon: "equation", lines: ["수식", ""], width: "w-[62px]", arrow: true },
      { icon: "symbol", lines: ["기호"], width: "w-[62px]", disabled: true },
    ],
  },
  {
    label: "미디어",
    className: "px-3",
    items: [
      { icon: "video", lines: ["비디오", ""], width: "w-[62px]", arrow: true },
      { icon: "audio", lines: ["오디오", ""], width: "w-[62px]", arrow: true },
      { icon: "record", lines: ["화면", "녹화"], width: "w-[62px]" },
    ],
  },
];

const RibbonButton = ({
  item,
  active = false,
  onClick,
}: {
  item: Command;
  active?: boolean;
  onClick?: () => void;
}) => (
  <button
    type="button"
    onClick={onClick}
    disabled={item.disabled}
    className={`flex h-[105px] flex-col items-center whitespace-nowrap text-[19px] leading-6 ${item.width} ${
      active ? "bg-[#c5c5c5] outline outline-1 -outline-offset-1 outline-[#8a8a8a]" : ""
    } ${item.disabled ? "text-[#b1afb1]" : "text-[#262626]"}`}
  >
    <svg viewBox="0 0 46 50" className="mb-[2px] mt-[3px] h-[50px] w-[46px] shrink-0 overflow-visible" aria-hidden="true">
      {RIBBON_ICONS[item.icon]}
    </svg>
    <span className="h-6">{item.lines[0]}</span>
    {item.lines.length > 1 && (
      <span className="flex h-6 items-center gap-2">
        {item.lines[1]}
        {item.arrow && <Chevron />}
      </span>
    )}
  </button>
);

const TABS = [
  "파일",
  "홈",
  "삽입",
  "그리기",
  "디자인",
  "전환",
  "애니메이션",
  "슬라이드 쇼",
  "녹음/녹화",
  "검토",
  "보기",
  "도움말",
  "Acrobat",
  "도형 서식",
];

const TabBar = () => {
  const [selected, setSelected] = useState("삽입");
  return (
    <header className="relative flex h-[39px] bg-[#b7472a] text-[19px] text-white">
      <svg viewBox="0 0 260 24" className="absolute right-0 top-0 h-6 w-[260px]" fill="#98402a" aria-hidden="true">
        <path d="M70 0H122Q110 5 96 3Q84 3 70 0zM141 3Q160 7 176 4Q200 -2 225 0H260V9Q240 9 226 13Q200 19 175 17Q150 14 141 3z" />
      </svg>
      <nav className="-ml-[14px] flex">
        {TABS.map((tab) => (
          <button
            key={tab}
            type="button"
            onClick={() => setSelected(tab)}
            className={`whitespace-nowrap pb-1 ${
              tab === "파일" ? "pl-5 pr-[29px]" : "px-5"
            } ${
              tab === selected
                ? "bg-[#f3f3f3] text-[#b7472a]"
                : tab === "도형 서식"
                  ? "bg-[#8f3721]"
                  : ""
            }`}
          >
            {tab}
          </button>
        ))}
      </nav>
      <label className="relative flex items-start gap-5 pl-7">
        <svg viewBox="0 0 18 26" className="mt-[3px] h-[26px] w-[18px]" fill="none" stroke="#fff" strokeWidth="1.8" aria-hidden="true">
          <path d="M5.5 19V16Q5.5 14 3.5 12A7.3 7.3 0 1 1 14.5 12Q12.5 14 12.5 16V19zM5.5 21.5H12.5M7 24H11" />
        </svg>
        <input
          type="text"
          aria-label="어떤 작업을 원하시나요?"
          placeholder="어떤 작업을 원하시나요?"
          className="h-[31px] w-[240px] bg-transparent placeholder:text-white focus:outline-none"
        />
      </label>
    </header>
  );
};

const Ribbon = () => {
  const [galleryOpen, setGalleryOpen] = useState(true);
  return (
    <div className="flex h-[141px] border-b-2 border-[#d2d2d2] bg-[#f3f3f3] pt-1">
      {GROUPS.map((group) => (
        <div key={group.label} className="flex items-start">
          <div className={`flex flex-col items-center ${group.className}`}>
            <div className="flex">
              {group.items.map((item) =>
                item.icon === "shapes" ? (
                  <div key={item.icon} className="relative">
                    <RibbonButton item={item} active onClick={() => setGalleryOpen(!galleryOpen)} />
                    {galleryOpen && <ShapeGallery />}
                  </div>
                ) : (
                  <RibbonButton key={item.icon} item={item} />
                ),
              )}
            </div>
            <span className="mt-[5px] whitespace-nowrap text-[19px] leading-6 text-[#262626]">{group.label}</span>
          </div>
          <span className="mt-px h-[129px] w-px bg-[#8e8e8e]" />
        </div>
      ))}
    </div>
  );
};

const Dropper = () => (
  <>
    <path d="M3 22Q1.5 20.5 4 18L14 8L17 11L7 21Q4.5 23 3 22z" fill="#fff" stroke={GRAY} strokeWidth="1.2" />
    <path d="M12 7L14 5L16 6.5L19 2Q22 0 23 2T21.5 6L18.5 9L20 11L18 13z" fill={GRAY} />
  </>
);

const QAT_ICONS: Record<string, React.ReactNode> = {
  undo: <path d="M15 1L9 7.5L15 13.500M9 8H17Q24.500 9 24.500 15Q24 21.500 15 22.500" fill="none" stroke={BLUE} strokeWidth="3" />,
  redo: (
    <>
      <path d="M9 4.5A8.5 8.5 0 1 0 18 5" fill="none" stroke="#b1b1b1" strokeWidth="3" />
      <path d="M14 2.5H22V10.5z" fill="#b1b1b1" />
    </>
  ),
  brush: (
    <>
      <path d="M1 15L12 8L18 14L10 24z" fill="#e9c07c" />
      <path d="M11 8L14 5L20 12L17 15zM16 7L21 1L24 4L19 10z" fill={GRAY} />
    </>
  ),
  text: (
    <>
      <path d="M0.5 2.5H22.5V20.5H0.5z" fill="#fff" stroke={GRAY} />
      <path d="M12 5.5H20M12 8.5H20M12 11.5H20M3 14.5H20M3 17.5H20" stroke="#a6a6a6" />
      <text x="2" y="12.5" fontSize="10" fontWeight="700" fill={BLUE}>
        가
      </text>
    </>
  ),
  shapes: (
    <g transform="scale(0.52)">
      <circle cx="31" cy="16" r="14" fill="#fff" stroke={BLUE} strokeWidth="2" />
      <path d="M1.5 10.5H25V34H1.5z" fill="#fff" stroke={BLUE} strokeWidth="2" />
      <path d="M28 20L41 33L28 46L15 33z" fill="#fff" stroke={BLUE} strokeWidth="2" />
    </g>
  ),
  omega: (
    <text x="12" y="21" fontSize="29" fontWeight="700" textAnchor="middle" fill="#b1b1b1" className="font-['Liberation_Serif',serif]">
      Ω
    </text>
  ),
  select: (
    <>
      <path d="M8 6H18V16H8z" fill={GOLD} />
      <path d="M0.5 0.5H10.5V10.5H0.5zM0.5 13.5H10.5V23.5H0.5z" fill="#fff" stroke={GRAY} />
      <path d="M15.5 8.5V21.5L18.5 18.5L20.5 23L22.5 22L20.5 17.5H24z" fill="#fff" stroke={GRAY} />
    </>
  ),
  shot: (
    <>
      <path d="M2.5 1.5H21.5V18.5H2.5z" fill="#fff" stroke="#a6a6a6" strokeDasharray="2 1" />
      <CameraMark x={0} y={13} s={0.58} />
      <path d="M21 16V22M18 19H24" stroke={BLUE} strokeWidth="2" />
    </>
  ),
  crop: <path d="M8.5 3V17H21M3 8.5H16V21" fill="none" stroke="#ababab" strokeWidth="3.5" />,
  down: <path d="M12 2V18M5 11L12 18L19 11M4 21H24" fill="none" stroke={BLUE} strokeWidth="2" />,
  distH: <path d="M1.5 6.5H5.5V17.5H1.5zM9.5 4.5H14.5V18.5H9.5zM18.5 8.5H22.5V14.5H18.5zM5.5 11.5H9.5M14.5 11.5H18.5" fill="#fff" stroke={GRAY} />,
  distV: <path d="M8.5 1.5H14.5V5.5H8.5zM4.5 8.5H18.5V14.5H4.5zM6.5 18.5H16.5V22.5H6.5zM11.5 5.5V8.5M11.5 14.5V18.5" fill="#fff" stroke={GRAY} />,
  front: (
    <>
      <path d="M0.5 0.5H9.5V9.5H0.5zM14.5 14.5H23.5V23.5H14.5z" fill="#fff" stroke={GRAY} />
      <path d="M5 5H19V19H5z" fill={GOLD} />
    </>
  ),
  back: (
    <>
      <path d="M5 4H19V19H5z" fill={GOLD} />
      <path d="M0.5 0.5H9.5V9.5H0.5zM13.5 13.5H23.5V23.5H13.5z" fill="#fff" stroke={GRAY} />
    </>
  ),
  forward: (
    <>
      <path d="M11.5 11.5H22.5V21.5H11.5z" fill="#fff" stroke={GRAY} />
      <path d="M2 1H17V17H2z" fill={GOLD} />
    </>
  ),
  backward: (
    <>
      <path d="M1 1H16V16H1z" fill={GOLD} />
      <path d="M10.5 10.5H22.5V21.5H10.5z" fill="#fff" stroke={GRAY} />
    </>
  ),
  merge1: <path d={circle(9, 9, 7.5) + circle(15, 15, 7.5)} fill="#e5dfe6" stroke="#b3abb3" />,
  merge2: (
    <>
      <path d={circle(9, 9, 7.5) + circle(15, 15, 7.5)} fill="#efe9f0" stroke="#b3abb3" strokeDasharray="2 2" />
      <path d="M7.5 15.5A7.5 7.5 0 0 1 16.5 7.5A7.5 7.5 0 0 1 7.5 15.5z" fill="#e5dde6" stroke="#9f9f9f" />
    </>
  ),
  merge3: <path d={circle(8, 8, 7) + circle(12, 12, 7) + circle(16, 16, 7)} fill="#e5dfe6" stroke="#b3abb3" />,
  merge4: (
    <>
      <path d={circle(9, 9, 7.5)} fill="#e5dfe6" stroke="#aaa2aa" />
      <path d={circle(15, 15, 7.5)} fill="#f1ecf2" stroke="#b3abb3" strokeDasharray="2 2" />
    </>
  ),
  merge5: <path d="M8 1.5A7 7 0 0 1 15.5 8A7.5 7.5 0 1 1 8 15.5A7 7 0 0 1 8 1.5z" fill="#e0d9e1" stroke="#b3abb3" />,
  bucket: (
    <>
      <path d="M13 6Q18 5 18 15L14 13z" fill={BLUE} />
      <path d="M1 9L8 3L14 9L7 16z" fill="#fff" stroke={GRAY} strokeWidth="1.2" />
      <path d="M5 5V3Q5 0.5 7 0.5T9 3V9" fill="none" stroke={GRAY} strokeWidth="1.2" />
      <path d="M24 7L17 16L15 14z" fill={GRAY} stroke={GRAY} strokeWidth="2" />
      <path d="M7 24Q8 16 13 17T15 22Q11 24 7 24z" fill={BLUE} />
    </>
  ),
  ga: (
    <text x="12" y="20" fontSize="22" fontWeight="700" textAnchor="middle" fill={BLUE} transform="rotate(20 12 12)">
      가
    </text>
  ),
  pie: (
    <g stroke="#e6e6e6" strokeWidth="1">
      <path d="M12 12V1A11 11 0 0 1 22.5 8.6z" fill={GOLD} />
      <path d="M12 12L22.5 8.6A11 11 0 0 1 18.5 20.9z" fill="#77a896" />
      <path d="M12 12L18.5 20.9A11 11 0 0 1 5.5 20.9z" fill={BLUE} />
      <path d="M12 12L5.5 20.9A11 11 0 0 1 1.5 8.6z" fill="#d9603c" />
      <path d="M12 12L1.5 8.6A11 11 0 0 1 12 1z" fill="#e69343" />
    </g>
  ),
  dropper1: <Dropper />,
  dropper2: <Dropper />,
  dropper3: <Dropper />,
  table: (
    <>
      <path d="M0.5 2.5H22.5V20.5H0.5z" fill="#fff" stroke={GRAY} />
      <path d="M0 2H23V6H0z" fill={GRAY} />
      <path d="M8 6V20M15.5 6V20M1 11H22M1 15.5H22" stroke="#8f8f8f" />
    </>
  ),
  rows: (
    <>
      <path d="M3.5 13.5H21.5V23.5H3.5zM12.5 13.5V23.5" fill="#f4eff6" stroke="#a8a0a8" />
      <path d="M1 5.5H24M4.5 2V10M12.5 2V10M20.5 2V10" stroke="#ababab" />
    </>
  ),
  cols: (
    <>
      <path d="M0.5 2.5H11.5V20.5H0.5zM0.5 11.5H11.5" fill="#f4eff6" stroke="#a8a0a8" />
      <path d="M18.5 1V23M14 3.5H24M14 11.5H24M14 20.5H24" stroke="#ababab" />
    </>
  ),
  borders: <path d="M1.5 1.5H22.5V21.5H1.5zM12 1.5V21.5M1.5 11.5H22.5" fill="#f4eff6" stroke="#a8a0a8" strokeDasharray="1.5 1" />,
  sound: (
    <>
      <path d="M12 9H16L24 1V23L16 16H12z" fill={GRAY} />
      <path d="M1 5H9M6 1L10 5L6 9" fill="none" stroke={BLUE} strokeWidth="2" />
      <circle cx="7" cy="17.5" r="6" fill="#fff" stroke={BLUE} />
      <path d="M7 14V18H10" fill="none" stroke={GRAY} />
    </>
  ),
  starGreen: <path d={star(5, 12, 4.6, 12, 13)} fill="#6ba892" />,
  starGold: <path d={star(5, 12, 4.6, 12, 13)} fill="#e9b867" />,
  starRed: <path d={star(5, 12, 4.6, 12, 13)} fill="#dd5535" />,
};

const QatButton = ({ name }: { name: string }) => (
  <button type="button" aria-label={name} className="flex w-[43px] shrink-0 justify-center">
    <svg viewBox="0 0 24 24" className="size-6 overflow-visible" aria-hidden="true">
      {QAT_ICONS[name]}
    </svg>
  </button>
);

const QatSplit = ({ name, muted }: { name: string; muted?: boolean }) => (
  <button type="button" aria-label={name} className="flex w-14 shrink-0 items-center gap-2 pl-[5px]">
    <svg viewBox="0 0 24 24" className="size-6 overflow-visible" aria-hidden="true">
      {QAT_ICONS[name]}
    </svg>
    <Chevron muted={muted} />
  </button>
);

const QatDivider = () => <span className="mx-[5px] h-9 w-px shrink-0 bg-[#c3c3c3]" />;

const QuickAccess = () => (
  <div className="flex h-[52px] items-center overflow-hidden pb-[2px]">
    <div className="-ml-[18px] flex items-center">
      <QatSplit name="undo" />
      {["redo", "brush", "text"].map((n) => (
        <QatButton key={n} name={n} />
      ))}
      <QatSplit name="shapes" />
      <QatButton name="omega" />
      <QatButton name="select" />
      <QatSplit name="shot" />
      <QatSplit name="crop" />
    </div>
    <span className="w-[363px] shrink-0" />
    {["down", "distH", "distV"].map((n) => (
      <QatButton key={n} name={n} />
    ))}
    <QatDivider />
    {["front", "back", "forward", "backward"].map((n) => (
      <QatButton key={n} name={n} />
    ))}
    <QatDivider />
    {["merge1", "merge2", "merge3", "merge4", "merge5"].map((n) => (
      <QatButton key={n} name={n} />
    ))}
    <QatDivider />
    {["bucket", "ga", "pie", "dropper1", "dropper2", "dropper3"].map((n) => (
      <QatButton key={n} name={n} />
    ))}
    <QatDivider />
    <QatSplit name="table" />
    <QatButton name="rows" />
    <QatButton name="cols" />
    <QatSplit name="borders" muted />
    <QatDivider />
    {["sound", "starGreen", "starGold", "starRed"].map((n) => (
      <QatButton key={n} name={n} />
    ))}
  </div>
);

const H_MARKS = [16, 15, 14, 13, 12, 11, 10, 9, 8, 7, 6, 5, 4, 3, 2, 1, 0, 1, 2];
const V_MARKS = [8, 7, 6, 5, 4, 3, 2, 1, 0, 1, 2, 3, 4];

const HorizontalRuler = () => (
  <div className="ml-[57px] flex h-[21px] overflow-hidden bg-white pb-[3px] text-[18px] leading-[18px] text-[#444]">
    <span className="flex w-[25px] shrink-0 items-center justify-end pr-[10px]">
      <i className="h-[3px] w-px bg-[#999]" />
    </span>
    {H_MARKS.map((n, i) => (
      <span key={i} className="grid w-[85px] shrink-0 grid-cols-4 place-items-center">
        <i className="h-[7px] w-px bg-[#333]" />
        <i className="h-[3px] w-px bg-[#999]" />
        <span>{n}</span>
        <i className="h-[3px] w-px bg-[#999]" />
      </span>
    ))}
  </div>
);

const VerticalRuler = () => (
  <div className="ml-[7px] mt-px flex w-[21px] shrink-0 flex-col overflow-hidden bg-white pr-px text-[18px] leading-[18px] text-[#444]">
    <span className="flex h-8 shrink-0 items-end justify-center pb-[10px]">
      <i className="h-px w-[3px] bg-[#999]" />
    </span>
    {V_MARKS.map((n, i) => (
      <span key={i} className="grid h-[85px] shrink-0 grid-rows-4 place-items-center">
        <i className="h-px w-[7px] bg-[#333]" />
        <i className="h-px w-[3px] bg-[#999]" />
        <span className="-rotate-90">{n}</span>
        <i className="h-px w-[3px] bg-[#999]" />
      </span>
    ))}
  </div>
);

const SlidePane = () => (
  <aside className="flex w-[308px] shrink-0 items-start border-r border-[#bdbdbd] pt-[23px]">
    <span className="-ml-1 w-8 text-[19px] leading-5 text-[#d04a2b]">1</span>
    <button
      type="button"
      aria-label="1"
      className="relative h-[145px] w-[250px] border-4 border-[#b7472a] bg-[#d9d9d9] ring-1 ring-inset ring-[#f3f3f3]"
    >
      <span className="absolute left-14 top-[10px] h-[37px] w-[55px] rounded-md border border-[#172c51] bg-[#4472c4]" />
      <span className="absolute left-[58px] top-[50px] h-[36px] w-[54px] rounded-md border border-[#172c51] bg-[#4472c4]" />
    </button>
  </aside>
);

const HANDLES = [
  [0, 0],
  [323, 0],
  [646, 0],
  [0, 216],
  [646, 216],
  [0, 432],
  [323, 432],
  [646, 432],
];

const Canvas = () => (
  <main className="relative ml-[26px] flex-1 overflow-hidden border-l border-[#c4c4c4] bg-[#d9d9d9]">
    <div className="absolute left-[662px] top-[62px] h-[434px] w-[647px] rounded-[72px] border-[3px] border-[#172c51] bg-[#4472c4]" />
    <div className="absolute left-[681px] top-[537px] h-[434px] w-[647px] rounded-[72px] border-[3px] border-[#172c51] bg-[#4472c4]">
      <svg viewBox="0 0 647 433" className="absolute -left-[3px] -top-[3px] h-[433px] w-[647px] overflow-visible" fill="none" aria-hidden="true">
        <path d="M0.5 0.5H646.5V432.5H0.5zM323.5 0V-36" stroke="#636363" />
        {HANDLES.map(([x, y]) => (
          <circle key={`${x}-${y}`} cx={x} cy={y} r="6.8" fill="#fff" stroke="#636363" strokeWidth="3" />
        ))}
        <circle cx="72" cy="1" r="6.8" fill="#ffe600" stroke="#636363" strokeWidth="3" />
        <path d="M329 -40.5A11.5 11.5 0 1 1 334.5 -52" stroke="#636363" strokeWidth="8" />
        <path d="M323.5 -52.5H347L335.5 -38z" fill="#636363" />
        <path d="M328 -41A11.5 11.5 0 1 1 334.8 -52V-49" stroke="#fff" strokeWidth="3.5" />
        <path d="M329.5 -50H341L335.5 -43z" fill="#fff" />
      </svg>
    </div>
  </main>
);

// Red guide marks laid over the whole window
const Annotations = () => (
  <svg viewBox="0 0 1970 1395" className="pointer-events-none absolute left-0 top-0 z-30 h-[1395px] w-[1970px]" fill="none" stroke="#ee1c24" strokeWidth="5" strokeLinejoin="round" strokeLinecap="round" aria-hidden="true">
    <path d="M135.5 1.5H192.5V39.5H135.5z" />
    <path d="M605.5 182.5H640.5V217.5H605.5z" />
    <path d="M957 289H1750.5V785H957z" />
    <path d="M203 48L572 175M654 219L930 304" />
    <path d="M594 184L574 166L566 185.5zM952 311L931.5 295L925.5 314z" fill="#ee1c24" strokeWidth="1" />
  </svg>
);

const App: React.FC = () => (
  <div className="relative flex h-screen flex-col overflow-hidden bg-[#e6e6e6] font-['Noto_Sans_CJK_KR','Noto_Sans',sans-serif] font-[350]">
    <TabBar />
    <Ribbon />
    <QuickAccess />
    <div className="flex min-h-0 flex-1">
      <SlidePane />
      <div className="flex min-w-0 flex-1 flex-col pt-[3px]">
        <HorizontalRuler />
        <div className="mt-[9px] flex min-h-0 flex-1">
          <VerticalRuler />
          <Canvas />
        </div>
      </div>
    </div>
    <Annotations />
  </div>
);

export default App;
